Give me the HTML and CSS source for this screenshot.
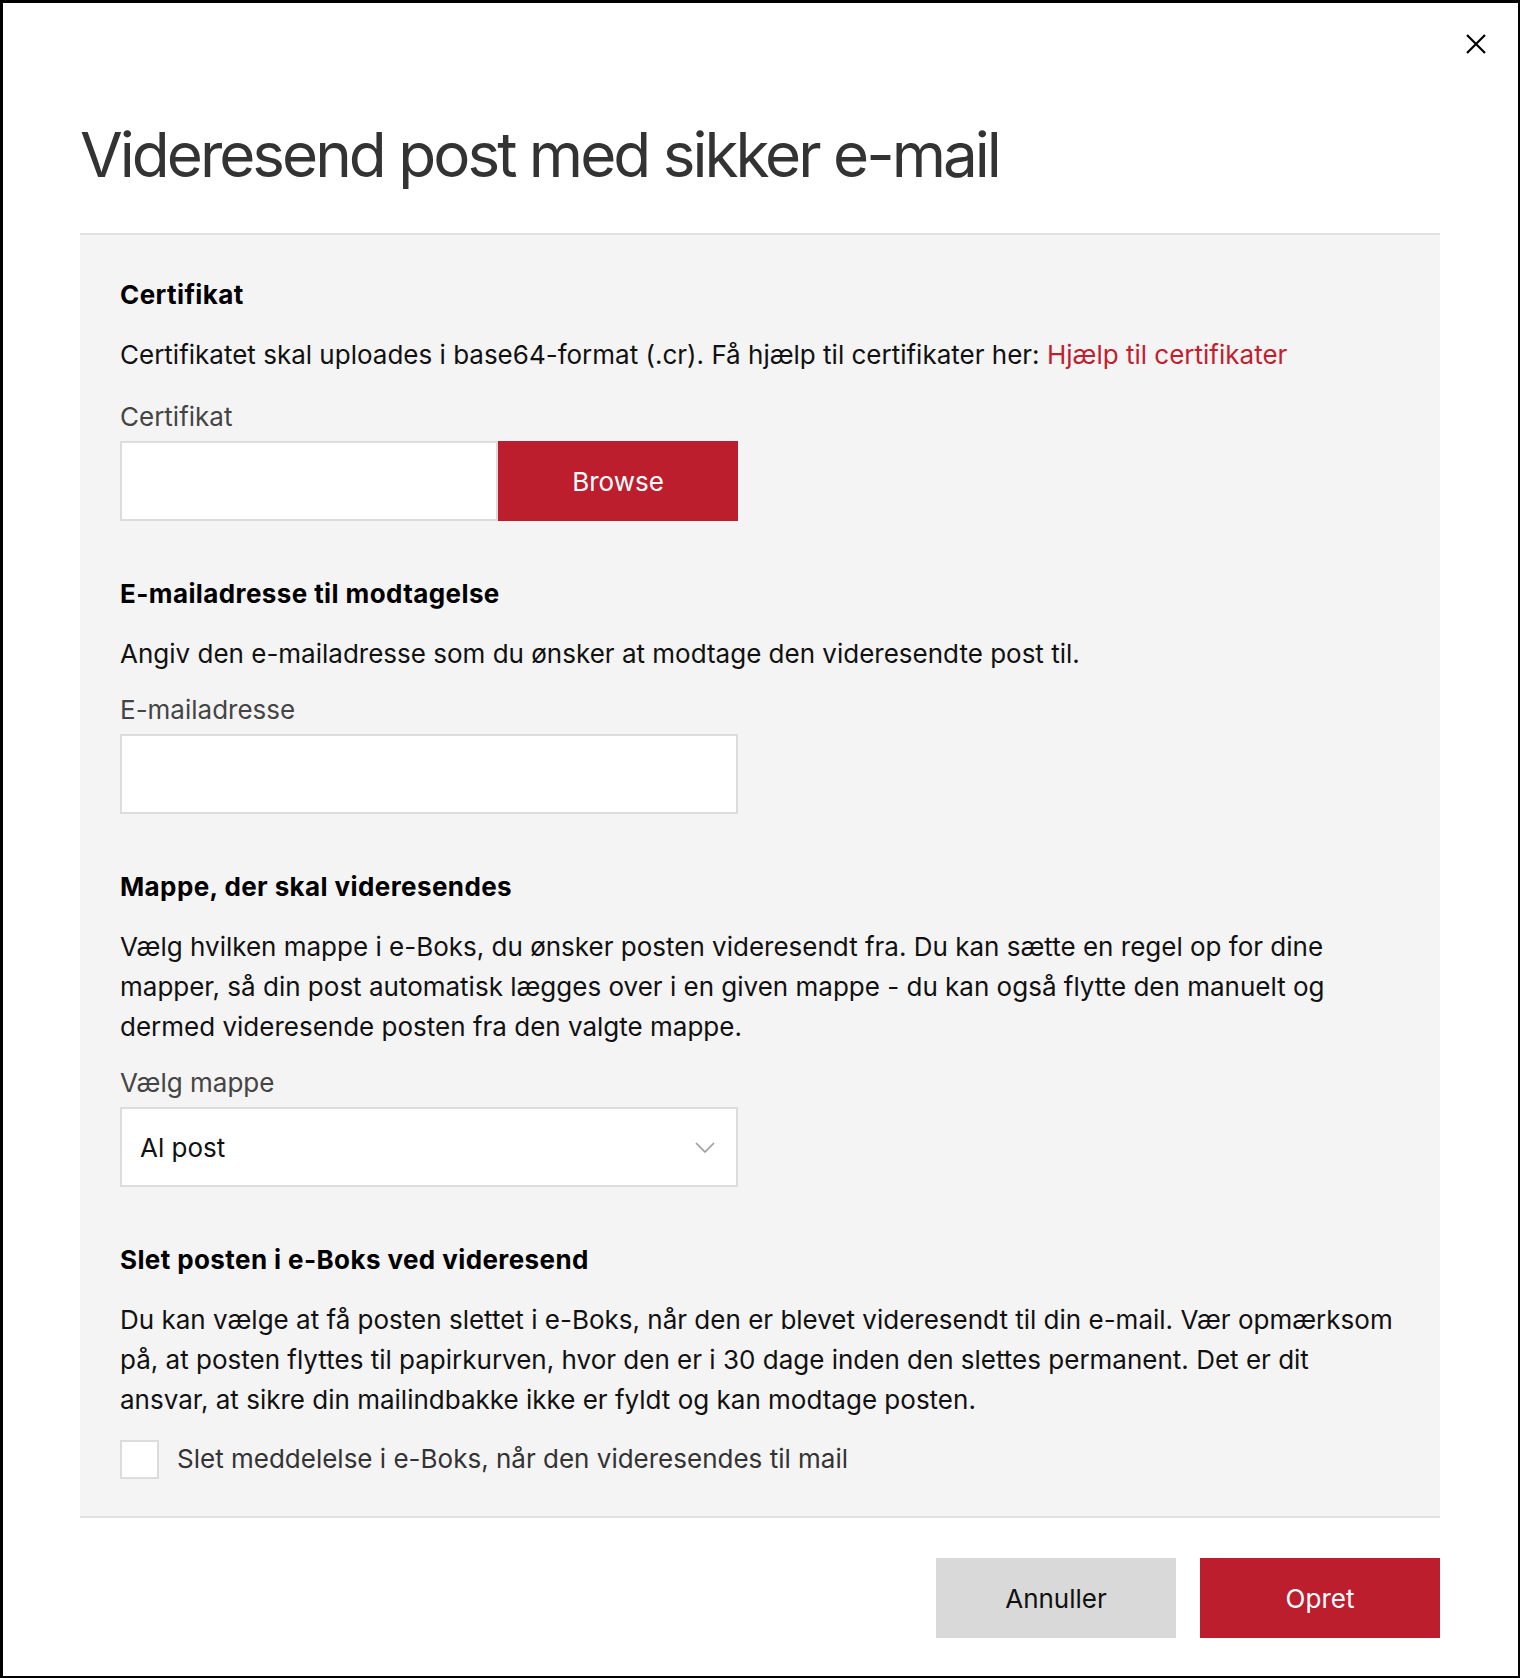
FILE: index.html
```html
<html>
    <head>
        <link rel="stylesheet" href="styles.css">
    </head>
    <body>
        <div class="modal">
            <button class="close" aria-label="Luk">
                <svg width="20" height="20" viewBox="0 0 20 20"><path d="M1 1 L19 19 M19 1 L1 19" stroke="#000" stroke-width="2.2" fill="none"/></svg>
            </button>

            <h1 class="title">Videresend post med sikker e-mail</h1>

            <div class="panel">
                <section class="group">
                    <h2>Certifikat</h2>
                    <p class="help">Certifikatet skal uploades i base64-format (.cr). Få hjælp til certifikater her: <a href="#">Hjælp til certifikater</a></p>
                    <label class="field-label">Certifikat</label>
                    <div class="file-row">
                        <input class="text-input" type="text">
                        <button class="btn btn-red">Browse</button>
                    </div>
                </section>

                <section class="group">
                    <h2>E-mailadresse til modtagelse</h2>
                    <p>Angiv den e-mailadresse som du ønsker at modtage den videresendte post til.</p>
                    <label class="field-label">E-mailadresse</label>
                    <input class="text-input wide" type="text">
                </section>

                <section class="group">
                    <h2>Mappe, der skal videresendes</h2>
                    <p>Vælg hvilken mappe i e-Boks, du ønsker posten videresendt fra. Du kan sætte en regel op for dine mapper, så din post automatisk lægges over i en given mappe - du kan også flytte den manuelt og dermed videresende posten fra den valgte mappe.</p>
                    <label class="field-label">Vælg mappe</label>
                    <div class="select">
                        <span>Al post</span>
                        <svg width="20" height="11" viewBox="0 0 20 11"><polyline points="1,1 10,10 19,1" stroke="#9a9a9a" stroke-width="1.6" fill="none"/></svg>
                    </div>
                </section>

                <section class="group">
                    <h2>Slet posten i e-Boks ved videresend</h2>
                    <p>Du kan vælge at få posten slettet i e-Boks, når den er blevet videresendt til din e-mail. Vær opmærksom på, at posten flyttes til papirkurven, hvor den er i 30 dage inden den slettes permanent. Det er dit ansvar, at sikre din mailindbakke ikke er fyldt og kan modtage posten.</p>
                    <label class="check">
                        <span class="box"></span>
                        Slet meddelelse i e-Boks, når den videresendes til mail
                    </label>
                </section>
            </div>

            <div class="actions">
                <button class="btn btn-grey">Annuller</button>
                <button class="btn btn-red">Opret</button>
            </div>
        </div>
    </body>
</html>
```

FILE: styles.css
```css
* {
    box-sizing: border-box;
}

body {
    margin: 0;
    font-family: Inter, "Noto Sans", sans-serif;
    color: #111;
    background: #fff;
}

.modal {
    position: relative;
    min-height: 100vh;
    border: 3px solid #000;
    border-right-width: 2px;
    border-bottom-width: 2px;
    padding: 115px 78px 36px 77px;
}

.close {
    position: absolute;
    top: 31px;
    right: 32px;
    border: 0;
    background: none;
    padding: 0;
    width: 20px;
    height: 20px;
}
.close svg {
    display: block;
}

.title {
    margin: 0 0 41px 0;
    font-size: 62px;
    line-height: 1.2;
    font-weight: 400;
    letter-spacing: -3px;
    color: #333;
}

.panel {
    background: #f4f4f4;
    border-top: 2px solid #e2e2e2;
    border-bottom: 2px solid #e2e2e2;
    padding: 40px 40px 37px 40px;
}

.group {
    margin-bottom: 53px;
}
.group:last-child {
    margin-bottom: 0;
}

.group h2 {
    margin: 0;
    font-size: 26px;
    line-height: 40px;
    font-weight: 700;
    letter-spacing: 0.4px;
    color: #000;
}

.group p {
    margin: 20px 0 0 0;
    font-size: 26px;
    line-height: 40px;
    color: #111;
}
.group p.help {
    margin-bottom: 22px;
}

.group a {
    color: #c01f2f;
    text-decoration: none;
}

.field-label {
    display: block;
    margin: 16px 0 4px 0;
    font-size: 26px;
    line-height: 40px;
    color: #444;
}

.file-row {
    display: flex;
    width: 618px;
}

.text-input {
    height: 80px;
    border: 2px solid #dcdcdc;
    background: #fff;
    font: inherit;
    font-size: 26px;
    padding: 0 18px;
    outline: none;
}
.file-row .text-input {
    flex: 1;
    min-width: 0;
}
.text-input.wide {
    display: block;
    width: 618px;
}

.btn {
    width: 240px;
    height: 80px;
    border: 0;
    font-family: inherit;
    font-size: 26px;
    cursor: pointer;
}
.btn-red {
    background: #bc1e2e;
    color: #fff;
}
.btn-grey {
    background: #d9d9d9;
    color: #111;
}

.select {
    width: 618px;
    height: 80px;
    display: flex;
    align-items: center;
    justify-content: space-between;
    border: 2px solid #dcdcdc;
    background: #fff;
    padding: 0 21px 0 18px;
    font-size: 26px;
    color: #111;
}
.select svg {
    display: block;
}

.check {
    display: flex;
    align-items: center;
    gap: 18px;
    margin-top: 19px;
    font-size: 26px;
    line-height: 40px;
    color: #333;
}
.check .box {
    width: 39px;
    height: 39px;
    border: 2px solid #dcdcdc;
    background: #fff;
    flex-shrink: 0;
}

.actions {
    display: flex;
    justify-content: flex-end;
    gap: 24px;
    margin-top: 40px;
}
```
